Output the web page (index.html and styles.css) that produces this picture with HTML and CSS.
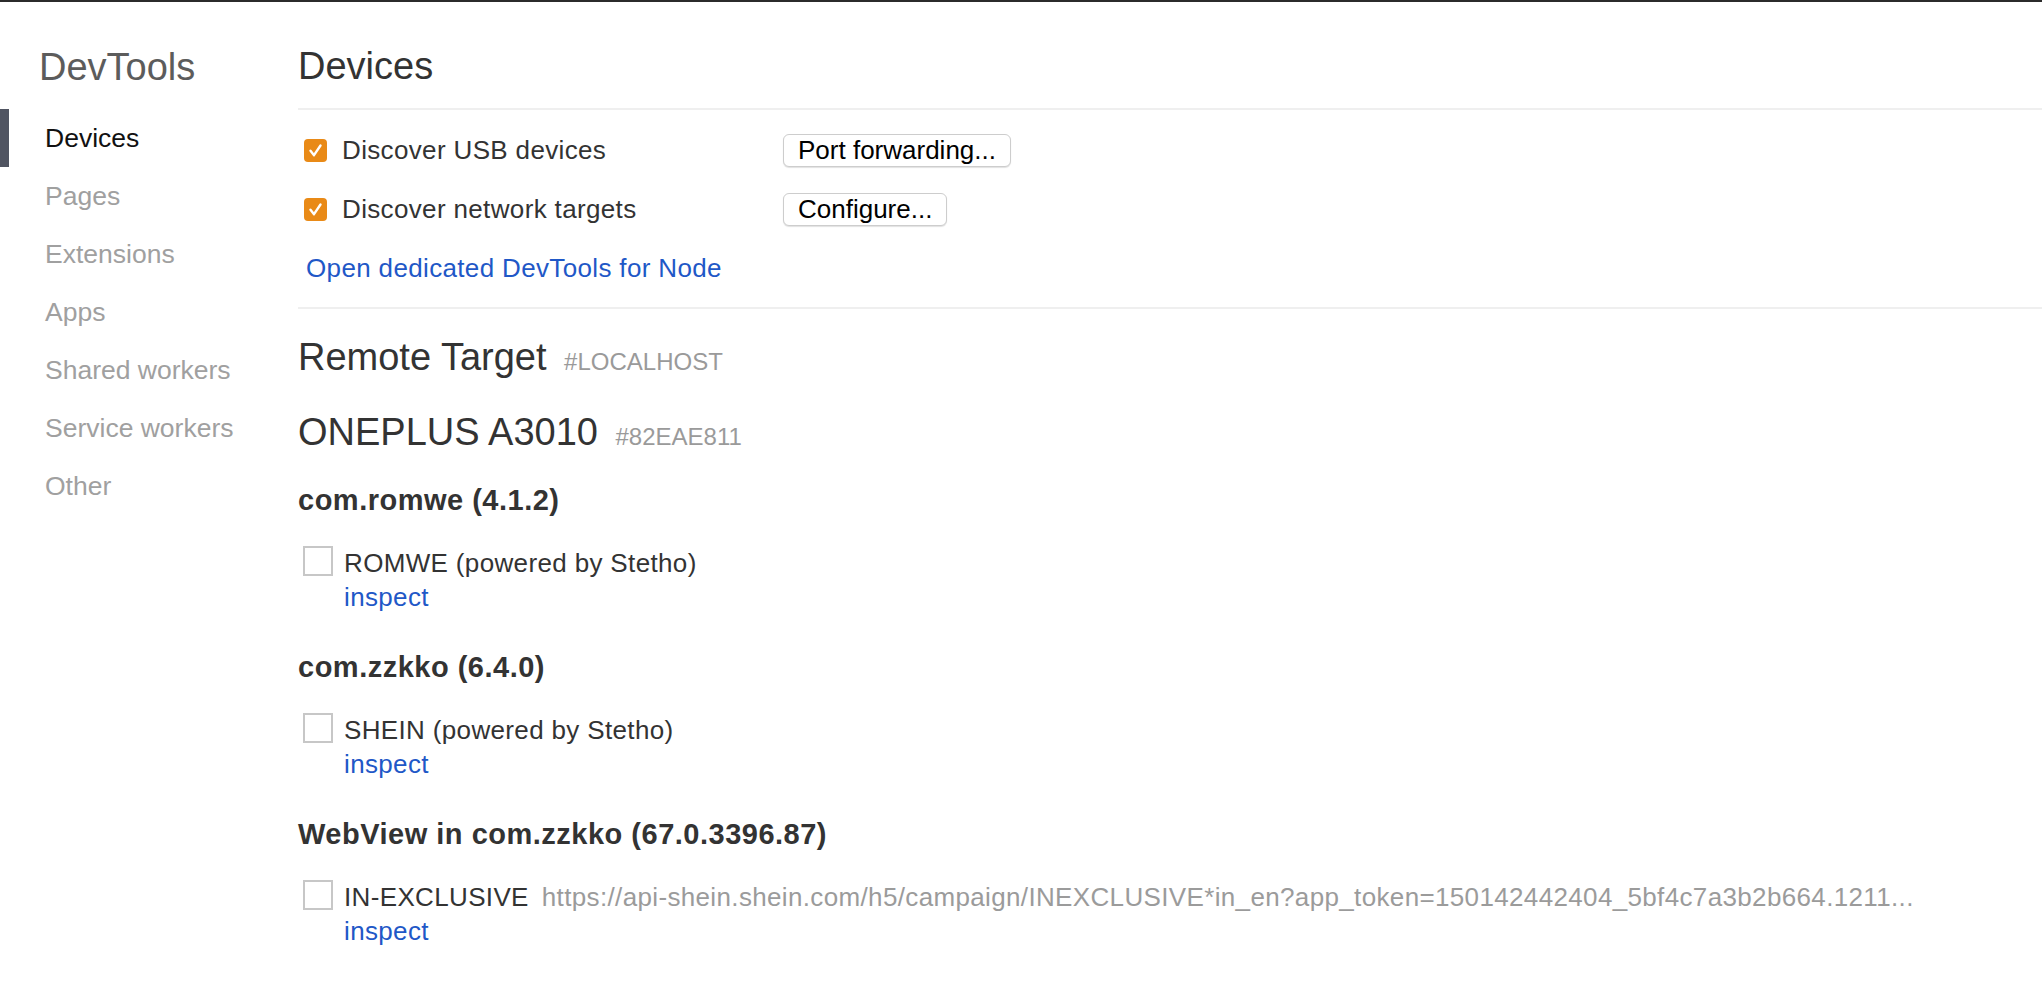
FILE: index.html
```html
<!DOCTYPE html>
<html>
<head>
  <title>Inspect with Chrome Developer Tools</title>
  <link rel="stylesheet" href="styles.css">
</head>
<body>
  <div class="page">
    <div class="sidebar">
      <h1 class="sidebar-title">DevTools</h1>
      <ul class="nav">
        <li class="nav-item selected">Devices</li>
        <li class="nav-item">Pages</li>
        <li class="nav-item">Extensions</li>
        <li class="nav-item">Apps</li>
        <li class="nav-item">Shared workers</li>
        <li class="nav-item">Service workers</li>
        <li class="nav-item">Other</li>
      </ul>
    </div>
    <div class="content">
      <h1 class="content-header">Devices</h1>

      <div class="options">
        <div class="option-row">
          <label class="option-label">
            <span class="check checked">
              <svg width="23" height="23" viewBox="0 0 23 23"><path d="M6.5 11.8 L10 16.2 L16.5 6.5" fill="none" stroke="#fff" stroke-width="2.4" stroke-linecap="round" stroke-linejoin="round"/></svg>
            </span>
            Discover USB devices
          </label>
          <button class="btn">Port forwarding...</button>
        </div>
        <div class="option-row">
          <label class="option-label">
            <span class="check checked">
              <svg width="23" height="23" viewBox="0 0 23 23"><path d="M6.5 11.8 L10 16.2 L16.5 6.5" fill="none" stroke="#fff" stroke-width="2.4" stroke-linecap="round" stroke-linejoin="round"/></svg>
            </span>
            Discover network targets
          </label>
          <button class="btn">Configure...</button>
        </div>
        <div class="option-row">
          <a class="link node-link" href="#">Open dedicated DevTools for Node</a>
        </div>
      </div>

      <h2 class="device-heading">Remote Target <span class="serial">#LOCALHOST</span></h2>

      <div class="device">
        <h2 class="device-heading device-name">ONEPLUS A3010 <span class="serial">#82EAE811</span></h2>

        <div class="browser">
          <h3 class="browser-name">com.romwe (4.1.2)</h3>
          <div class="target">
            <span class="check"></span>
            <div class="target-info">
              <div class="target-name">ROMWE (powered by Stetho)</div>
              <a class="link" href="#">inspect</a>
            </div>
          </div>
        </div>

        <div class="browser">
          <h3 class="browser-name">com.zzkko (6.4.0)</h3>
          <div class="target">
            <span class="check"></span>
            <div class="target-info">
              <div class="target-name">SHEIN (powered by Stetho)</div>
              <a class="link" href="#">inspect</a>
            </div>
          </div>
        </div>

        <div class="browser">
          <h3 class="browser-name">WebView in com.zzkko (67.0.3396.87)</h3>
          <div class="target">
            <span class="check"></span>
            <div class="target-info">
              <div class="target-name">IN-EXCLUSIVE<span class="target-url">https://api-shein.shein.com/h5/campaign/INEXCLUSIVE*in_en?app_token=150142442404_5bf4c7a3b2b664.1211...</span></div>
              <a class="link" href="#">inspect</a>
            </div>
          </div>
        </div>
      </div>
    </div>
  </div>
</body>
</html>
```

FILE: styles.css
```css
* {
  box-sizing: border-box;
}
body {
  margin: 0;
  border-top: 2px solid #2b2b2b;
  background: #fff;
  font-family: "Liberation Sans", Arial, sans-serif;
  font-size: 26px;
  color: #333;
}
h1, h2, h3, ul {
  margin: 0;
  padding: 0;
  font-weight: normal;
}
.page {
  display: flex;
}
.sidebar {
  width: 298px;
  flex-shrink: 0;
  padding-top: 43px;
}
.sidebar-title {
  padding-left: 39px;
  margin-bottom: 20px;
  font-size: 38px;
  line-height: 44px;
  color: #5c5c5c;
}
.nav {
  list-style: none;
}
.nav-item {
  height: 58px;
  line-height: 58px;
  padding-left: 36px;
  border-left: 9px solid transparent;
  font-size: 26.5px;
  color: #a0a0a0;
}
.nav-item.selected {
  border-left-color: #505461;
  color: #111;
}
.content {
  flex-grow: 1;
  padding-top: 42px;
  letter-spacing: .35px;
}
.content-header {
  font-size: 38px;
  line-height: 44px;
  padding-bottom: 20px;
  border-bottom: 2px solid #efefef;
  letter-spacing: 0;
  color: #333;
}
.options {
  padding: 11px 0 9px;
  border-bottom: 2px solid #efefef;
}
.option-row {
  display: flex;
  align-items: center;
  height: 59px;
}
.option-label {
  display: flex;
  align-items: center;
  width: 485px;
  padding-left: 6px;
}
.check {
  display: inline-block;
  flex-shrink: 0;
  width: 30px;
  height: 30px;
  border: 2px solid #c7c7c7;
  background: #fff;
}
.check.checked {
  width: 23px;
  height: 23px;
  margin-right: 15px;
  border: none;
  border-radius: 4px;
  background: #e98a17;
}
.check svg {
  display: block;
}
.btn {
  height: 33px;
  padding: 0 14px;
  border: 1px solid #cdcdcd;
  border-radius: 6px;
  background: #fff;
  box-shadow: 0 1px 1px rgba(0, 0, 0, .12);
  font-family: "Liberation Sans", Arial, sans-serif;
  font-size: 26px;
  line-height: 31px;
  color: #000;
}
.link {
  color: #1f58c7;
  text-decoration: none;
}
.node-link {
  padding-left: 8px;
}
.device-heading {
  margin-top: 26px;
  font-size: 38px;
  line-height: 44px;
  letter-spacing: 0;
  color: #333;
}
.device-name {
  margin-top: 26px;
}
.serial {
  margin-left: 7px;
  font-size: 24px;
  color: #9a9a9a;
}
.browser {
  margin-top: 36px;
}
.device-name + .browser {
  margin-top: 24px;
}
.browser-name {
  font-size: 29px;
  font-weight: bold;
  line-height: 34px;
  letter-spacing: .5px;
  color: #333;
}
.target {
  display: flex;
  gap: 11px;
  margin-top: 29px;
  padding-left: 5px;
}
.target-info {
  line-height: 34px;
  min-width: 0;
}
.target-name {
  white-space: nowrap;
}
.target-url {
  margin-left: 13px;
  color: #9b9b9b;
}
```
